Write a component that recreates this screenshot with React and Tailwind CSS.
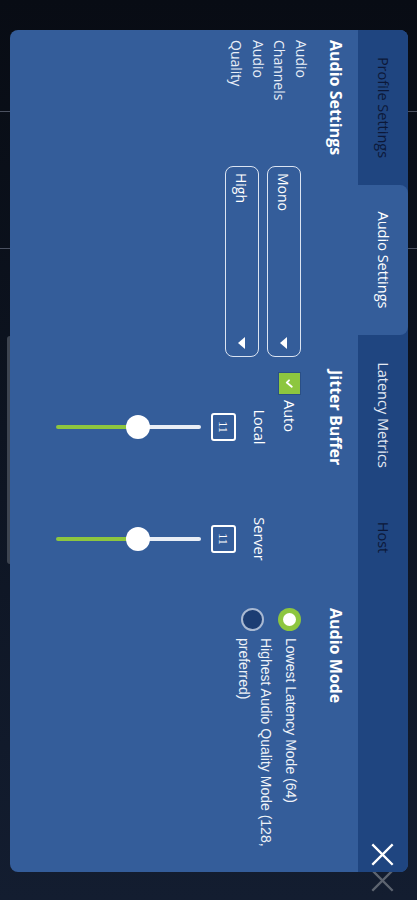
import React from "react";

const tabs = [
  { name: "Profile Settings", width: "w-[155px]", tone: "text-[#0c1838]" },
  { name: "Audio Settings", width: "w-[150px]", active: true },
  { name: "Latency Metrics", width: "w-[160px]", tone: "text-[#e3e9f3]" },
  { name: "Host", width: "w-[85px]", tone: "text-[#0c1838]" },
];

function CloseIcon({ className }) {
  return (
    <svg viewBox="0 0 24 24" className={className} fill="none" stroke="currentColor" strokeWidth="2.2" strokeLinecap="square">
      <path d="M3 3 L21 21 M21 3 L3 21" />
    </svg>
  );
}

function Select({ value }) {
  return (
    <div className="flex items-center justify-between w-[191px] h-[34px] rounded-[8px] border-[1.5px] border-[#dbe4f2] pl-[6px] pr-[7px] text-[14px] text-white">
      <span>{value}</span>
      <svg viewBox="0 0 12 7" className="w-[12px] h-[7px]" fill="#ffffff">
        <path d="M0 0 L12 0 L6 7 Z" />
      </svg>
    </div>
  );
}

function Slider({ fill }) {
  // vertical slider, green fill grows from the bottom
  const top = 145 - fill;
  return (
    <div className="relative w-[24px] h-[145px] flex justify-center">
      <div className="flex flex-col w-[4px] h-full">
        <div className="bg-[#e9eef6] rounded-t-full" style={{ height: top }} />
        <div className="bg-[#8dc63f] flex-1 rounded-b-full" />
      </div>
      <div className="absolute left-0 w-[24px] h-[24px] rounded-full bg-white" style={{ top: top - 12 }} />
    </div>
  );
}

function JitterColumn({ label }) {
  return (
    <div className="flex flex-col items-center w-[60px]">
      <div className="text-[14.5px] leading-[18px] text-white">{label}</div>
      <div className="mt-[14px] w-[28px] h-[25px] border-2 border-white rounded-[3px] flex items-center justify-center text-[12px] text-white font-['Liberation_Serif',serif]">
        11
      </div>
      <div className="mt-[10px]">
        <Slider fill={82} />
      </div>
    </div>
  );
}

export default function App() {
  return (
    <div className="w-[417px] h-[900px] overflow-hidden bg-[#0b1120]">
      <div className="relative w-[900px] h-[417px] pl-[30px] pt-[9px] origin-top-left rotate-90 translate-x-[417px] bg-gradient-to-r from-[#080c14] to-[#131d30] font-['Open_Sans',sans-serif]">
        <div className="absolute left-[111px] top-0 w-px h-full bg-[#4b5160]" />
        <div className="absolute left-[248px] top-0 w-px h-full bg-[#4b5160]" />
        <div className="absolute left-[336px] top-[404px] w-[228px] h-[6px] rounded bg-[#3d4450]" />
        <CloseIcon className="absolute left-[868px] top-[22px] w-[25px] h-[25px] text-[#5d6470]" />

        <div className="relative z-10 w-[842px] h-[398px] rounded-[8px] overflow-hidden bg-[#345d9a] flex flex-col">
          <div className="flex h-[50px] bg-[#1f4580] shrink-0">
            {tabs.map((t) => (
              <div
                key={t.name}
                className={`${t.width} flex items-center justify-center text-[14.5px] ${
                  t.active ? "bg-[#345d9a] rounded-t-[8px] text-white" : t.tone
                }`}
              >
                {t.name}
              </div>
            ))}
            <div className="flex-1" />
            <div className="flex items-center pr-[5px]">
              <CloseIcon className="w-[25px] h-[25px] text-white" />
            </div>
          </div>

          <div className="flex pl-[10px] pt-[12px]">
            <div className="w-[330px] shrink-0">
              <div className="text-[16px] leading-[21px] font-bold text-white">Audio Settings</div>
              <div className="flex items-start">
                <div className="w-[126px] mt-[13px] text-[14px] leading-[21.5px] text-[#e8eef7]">
                  <div>Audio<br />Channels</div>
                  <div>Audio<br />Quality</div>
                </div>
                <div className="flex flex-col gap-[8px] mt-[24px]">
                  <Select value="Mono" />
                  <Select value="High" />
                </div>
              </div>
            </div>

            <div className="w-[238px] shrink-0">
              <div className="text-[16px] leading-[21px] font-bold text-white">Jitter Buffer</div>
              <div className="flex items-center mt-[24px] ml-[2px]">
                <div className="w-[23px] h-[23px] bg-[#8dc63f] border border-[#2a4f86] flex items-center justify-center">
                  <svg viewBox="0 0 12 12" className="w-[11px] h-[11px]" fill="none" stroke="#ffffff" strokeWidth="2" strokeLinecap="round" strokeLinejoin="round">
                    <path d="M2.5 6.5 L5 9 L9.5 3.5" />
                  </svg>
                </div>
                <span className="ml-[5px] text-[14.5px] text-white">Auto</span>
              </div>
              <div className="flex gap-[52px] pl-[27px] mt-[10px]">
                <JitterColumn label="Local" />
                <JitterColumn label="Server" />
              </div>
            </div>

            <div className="flex-1">
              <div className="text-[16px] leading-[21px] font-bold text-white">Audio Mode</div>
              <div className="mt-[23px] flex flex-col gap-[1px] font-['Liberation_Sans',sans-serif] text-[14px] leading-[22px] text-[#eef2f8]">
                <div className="flex items-start gap-[7px]">
                  <div className="mt-[1px] w-[23px] h-[23px] rounded-full bg-[#8dc63f] flex items-center justify-center shrink-0">
                    <div className="w-[13px] h-[13px] rounded-full bg-white" />
                  </div>
                  <span>Lowest Latency Mode (64)</span>
                </div>
                <div className="flex items-start gap-[7px]">
                  <div className="mt-[13px] w-[23px] h-[23px] rounded-full bg-[#1c3d73] border-2 border-[#a9b9d2] shrink-0" />
                  <span className="w-[215px]">Highest Audio Quality Mode (128, preferred)</span>
                </div>
              </div>
            </div>
          </div>
        </div>
      </div>
    </div>
  );
}
